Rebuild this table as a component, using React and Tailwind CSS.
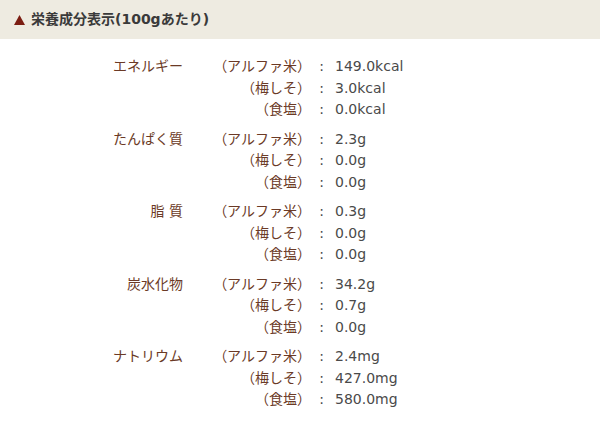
const groups = [
  { name: "エネルギー", rows: [["（アルファ米）", "149.0kcal"], ["（梅しそ）", "3.0kcal"], ["（食塩）", "0.0kcal"]] },
  { name: "たんぱく質", rows: [["（アルファ米）", "2.3g"], ["（梅しそ）", "0.0g"], ["（食塩）", "0.0g"]] },
  { name: "脂 質", rows: [["（アルファ米）", "0.3g"], ["（梅しそ）", "0.0g"], ["（食塩）", "0.0g"]] },
  { name: "炭水化物", rows: [["（アルファ米）", "34.2g"], ["（梅しそ）", "0.7g"], ["（食塩）", "0.0g"]] },
  { name: "ナトリウム", rows: [["（アルファ米）", "2.4mg"], ["（梅しそ）", "427.0mg"], ["（食塩）", "580.0mg"]] },
];

const App = () => {
  return (
    <div
      className="w-[600px] h-[433px] bg-white overflow-hidden"
      style={{ fontFamily: '"DejaVu Sans", "Noto Sans CJK JP", sans-serif' }}
    >
      <div className="h-[39px] bg-[#eeebe1] flex items-center pl-[14px] gap-[6px]">
        <svg width="11" height="10" viewBox="0 0 11 10" className="mt-[1px]">
          <polygon points="5.5,0 11,10 0,10" fill="#7b1d12" />
        </svg>
        <h2 className="text-[14px] font-bold text-[#3a3a3a]">栄養成分表示(100gあたり)</h2>
      </div>

      <div className="pt-[17px] flex flex-col gap-[8px] text-[14px] leading-[21.5px]">
        {groups.map((g) => (
          <div key={g.name} className="flex flex-col">
            {g.rows.map(([sub, val], i) => (
              <div key={sub} className="flex">
                <div className="w-[183px] text-right text-[#6b3a26] whitespace-pre">{i === 0 ? g.name : ""}</div>
                <div className="w-[128px] text-right text-[#6b3a26]">{sub}</div>
                <div className="w-[21px] text-center text-[#4a4a4a]">:</div>
                <div className="pl-[3px] text-[#4a4a4a]">{val}</div>
              </div>
            ))}
          </div>
        ))}
      </div>
    </div>
  );
};

export default App;
